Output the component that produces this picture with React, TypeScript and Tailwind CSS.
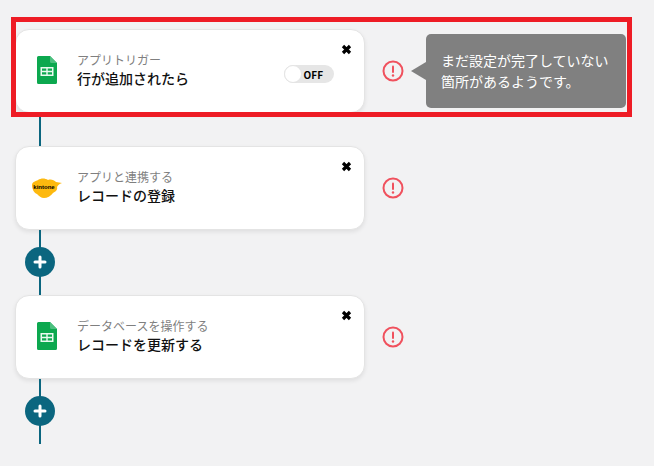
const FONT = { fontFamily: '"Noto Sans CJK JP", "Noto Sans", sans-serif' };

const SheetsIcon = () => (
  <svg width="20" height="28" viewBox="0 0 20 28" className="-mt-[2px]">
    <path d="M1.500 0H13L20 7V26.500A1.500 1.500 0 0 1 18.500 28H1.500A1.500 1.500 0 0 1 0 26.500V1.500A1.500 1.500 0 0 1 1.500 0Z" fill="#0ca84f" />
    <path d="M13 0L20 7H14.500A1.500 1.500 0 0 1 13 5.500Z" fill="#4cc07f" />
    <path d="M3.500 11H16.500V20H3.500ZM5 12.500V14.800H9.300V12.500ZM10.700 12.500V14.800H15V12.500ZM5 16.200V18.500H9.300V16.200ZM10.700 16.200V18.500H15V16.200Z" fill="#eafaf0" fillRule="evenodd" />
  </svg>
);

const KintoneIcon = () => (
  <div className="relative w-[30px] h-[20px] flex items-center justify-center">
    <svg className="absolute inset-0" width="30" height="20" viewBox="0 0 30 20">
      <path d="M0 7C0 4 4 3 6 2C9 0 13 0 16 2C19 1 22 2 24 4L30 5C27 6 26 7 25 9C26 12 23 14 21 15C19 18 15 20 12 20C9 20 7 18 5 16C2 15 0 11 0 7Z" fill="#fdb90f" />
    </svg>
    <span className="relative text-[6px] font-bold text-black leading-none -mt-[2px] -ml-[6px]" style={{ fontFamily: '"Liberation Sans", sans-serif' }}>
      kintone
    </span>
  </div>
);

const AlertIcon = () => (
  <svg width="22" height="22" viewBox="0 0 22 22" className="shrink-0">
    <circle cx="11" cy="11" r="9.500" fill="none" stroke="#f0515d" strokeWidth="2" />
    <rect x="10" y="5.500" width="2" height="7.500" rx="1" fill="#f0515d" />
    <circle cx="11" cy="15.500" r="1.200" fill="#f0515d" />
  </svg>
);

const CloseIcon = () => (
  <svg width="11" height="11" viewBox="0 0 11 11" className="absolute right-[12px] top-[14px]">
    <path d="M2 2L9 9M9 2L2 9" stroke="#000" strokeWidth="3.200" strokeLinecap="butt" />
  </svg>
);

const PlusButton = () => (
  <div className="relative w-[2px] h-[65px] bg-[#0b667f] flex items-center justify-center">
    <button className="absolute -mt-[1px] w-[30px] h-[30px] rounded-full bg-[#0b667f] flex items-center justify-center">
      <svg width="14" height="14" viewBox="0 0 14 14">
        <path d="M7 2V12M2 7H12" stroke="#fff" strokeWidth="3" strokeLinecap="round" />
      </svg>
    </button>
  </div>
);

const StepCard = ({ icon, label, title, toggle }: { icon: React.ReactNode; label: string; title: string; toggle?: boolean }) => (
  <div className="flex items-center gap-[17px]">
    <div className="relative w-[350px] h-[84px] bg-white rounded-[14px] border border-[#e4e4e4] shadow-[0_2px_4px_rgba(0,0,0,0.08)] flex items-center shrink-0">
      <div className="w-[62px] flex justify-center shrink-0">{icon}</div>
      <div className="flex flex-col -mt-[4px] -ml-[1px]">
        <span className="text-[12px] leading-[18px] text-[#7f7f7f]">{label}</span>
        <span className="text-[14px] leading-[19px] font-medium text-[#111]">{title}</span>
      </div>
      <CloseIcon />
      {toggle && (
        <div className="absolute left-[268px] top-[35px] w-[50px] h-[18px] rounded-full bg-[#e6e6e6] flex items-center justify-end pr-[11px]">
          <div className="absolute left-0 top-0 w-[18px] h-[18px] rounded-full bg-white border border-[#e4e4e4]" />
          <span className="text-[10px] font-bold text-black">OFF</span>
        </div>
      )}
    </div>
    <AlertIcon />
  </div>
);

export default function App() {
  return (
    <div className="relative w-[654px] h-[466px] bg-[#f2f2f3] overflow-hidden pt-[29px] pl-[15px]" style={FONT}>
      <div className="flex flex-col items-start">
        <StepCard icon={<SheetsIcon />} label="アプリトリガー" title="行が追加されたら" toggle />
        <div className="w-[2px] h-[33px] bg-[#0b667f] ml-[24px]" />
        <StepCard icon={<KintoneIcon />} label="アプリと連携する" title="レコードの登録" />
        <div className="ml-[24px]"><PlusButton /></div>
        <StepCard icon={<SheetsIcon />} label="データベースを操作する" title="レコードを更新する" />
        <div className="ml-[24px]"><PlusButton /></div>
      </div>

      {/* tooltip */}
      <div className="absolute left-[426px] top-[34px] w-[200px] h-[74px] bg-[#808080] rounded-[5px] pl-[15px] pt-[16px] text-[14px] leading-[21px] text-white">
        <div className="absolute -left-[15px] top-[28px] w-0 h-0 border-y-[9px] border-y-transparent border-r-[15px] border-r-[#808080]" />
        まだ設定が完了していない
        <br />
        箇所があるようです。
      </div>

      {/* highlight frame */}
      <div className="absolute left-[11px] top-[17px] w-[621px] h-[100px] border-[5px] border-[#ee1c25] pointer-events-none" />
    </div>
  );
}
